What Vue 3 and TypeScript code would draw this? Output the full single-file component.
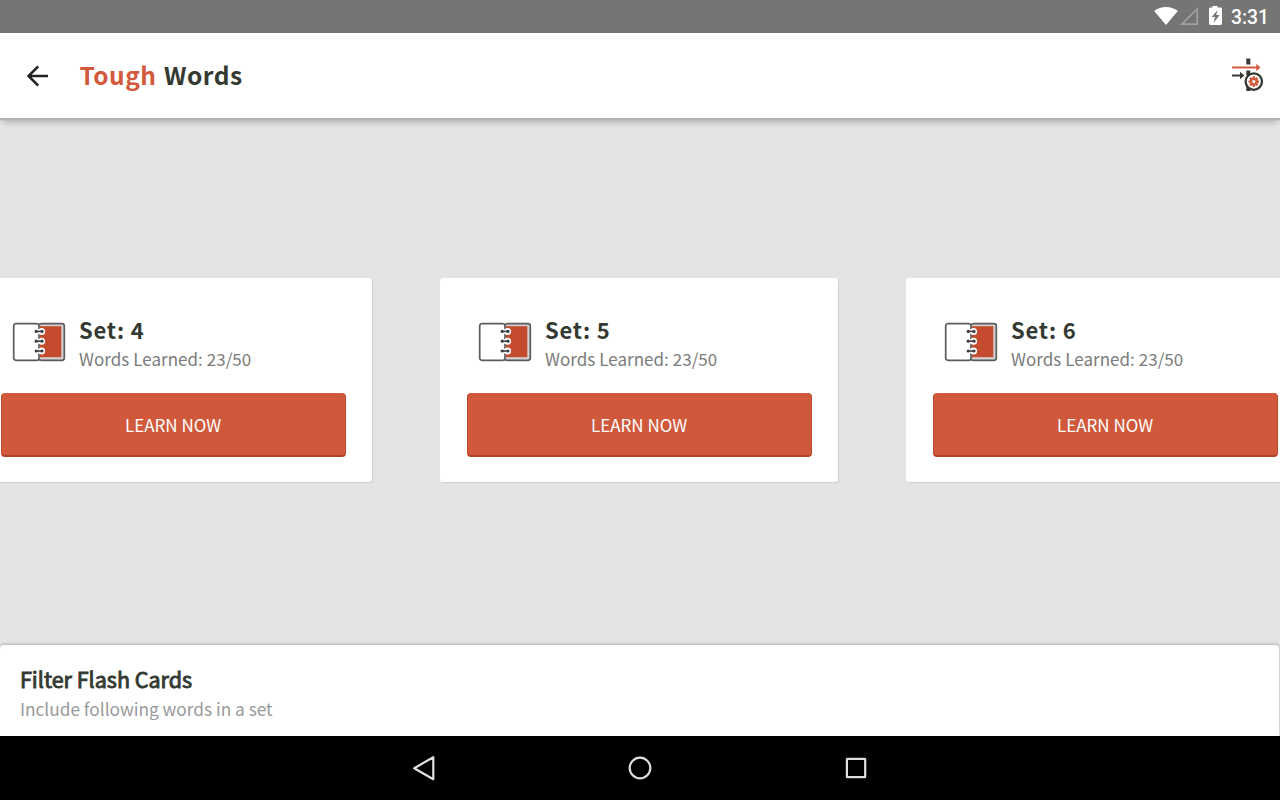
<script setup lang="ts">
interface WordSet {
  id: number
  learned: number
  total: number
}

const sets: WordSet[] = [4, 5, 6].map((id) => ({ id, learned: 23, total: 50 }))
const rings = [9.4, 19.2, 29]
const teeth = [0, 45, 90, 135]
</script>

<template>
  <div class="screen">
    <div class="status">
      <svg class="status-icons" width="72" height="33" viewBox="0 0 72 33">
        <path d="M2.2 11C8.8 5.6 19.2 5.6 25.8 11L14 25Z" fill="#fff" />
        <path d="M45.2 9V24.1H29.8Z" fill="none" stroke="#a0a0a0" stroke-width="1.7" />
        <path d="M60.4 6h5.2v1.6h2.6q1.8 0 1.8 1.4v14.6q0 1.4-1.3 1.4H58.3q-1.3 0-1.3-1.4V9Q57 7.6 58.8 7.6h1.6Z" fill="#fff" />
        <path d="M65.6 10l-6 7h3.5l-1.6 6 6.2-8h-3.5Z" fill="#757575" />
      </svg>
      <span class="time">3:31</span>
    </div>

    <header class="bar">
      <svg class="back" width="24" height="24" viewBox="0 0 24 24">
        <path d="M22 12H3M12.2 2.3L2.5 12l9.7 9.7" fill="none" stroke="#212121" stroke-width="2.5" />
      </svg>
      <h1><span class="accent">Tough</span> <span class="rest">Words</span></h1>
      <svg class="settings" width="34" height="34" viewBox="0 0 34 34">
        <path d="M15.3 0.5h4v6h-4ZM15.3 12.5h4v5h-4ZM15.3 27h4v6h-4Z" fill="#343a32" />
        <path d="M1 9.5h25" stroke="#d2593b" stroke-width="2" />
        <path d="M25.3 5.8l4.2 3.7-4.2 3.7Z" fill="#d2593b" />
        <path d="M1 17.5h9" stroke="#343a32" stroke-width="2" />
        <path d="M9 13.7l4.4 3.8L9 21.3Z" fill="#343a32" />
        <circle cx="22.8" cy="23.6" r="8.2" fill="#fff" stroke="#343a32" stroke-width="2.3" />
        <g stroke="#d2593b">
          <path v-for="a in teeth" :key="a" d="M22.8 18.3v2.6M22.8 26.3v2.6" stroke-width="2.2" :transform="`rotate(${a} 22.8 23.6)`" />
          <circle cx="22.8" cy="23.6" r="2.8" fill="#fff" stroke-width="2.4" />
        </g>
      </svg>
    </header>

    <main class="carousel">
      <article v-for="s in sets" :key="s.id" class="card">
        <div class="info">
          <svg class="book" width="54" height="40" viewBox="0 0 54 40">
            <rect x="1.5" y="1.5" width="51" height="37" rx="2.5" fill="#fff" />
            <path d="M27 2h23q2 0 2 2v32q0 2-2 2H27Z" fill="#d4d1d3" />
            <path d="M28 4.2h21.3v31H28Z" fill="#c44b2e" />
            <path d="M27 38V2M4 1.7h20.7q2 0 2.3 1.8 .3-1.8 2.3-1.8H50q2.3 0 2.3 2.3v32q0 2.3-2.3 2.3H29.3q-2 0-2.3-1.5-.3 1.5-2.3 1.5H4q-2.3 0-2.3-2.3V4Q1.7 1.7 4 1.7Z" fill="none" stroke="#5c5c5e" stroke-width="1.7" />
            <g v-for="y in rings" :key="y">
              <circle cx="29.6" :cy="y" r="3.5" fill="#fff" />
              <path :d="`M24 ${y}h6.2`" stroke="#fff" stroke-width="4.4" />
              <path :d="`M24 ${y}h6`" stroke="#3f3f43" stroke-width="1.6" />
              <circle cx="24.2" :cy="y" r="1.6" fill="#3f3f43" />
              <circle cx="30" :cy="y" r="1.6" fill="#3f3f43" />
            </g>
          </svg>
          <div class="labels">
            <h2>Set: {{ s.id }}</h2>
            <p>Words Learned: {{ s.learned }}/{{ s.total }}</p>
          </div>
        </div>
        <button class="learn" type="button">LEARN NOW</button>
      </article>
    </main>

    <section class="filter">
      <h3>Filter Flash Cards</h3>
      <p>Include following words in a set</p>
    </section>

    <nav class="nav">
      <svg width="32" height="32" viewBox="0 0 32 32"><path d="M25.3 5.2v22L6.2 16.2Z" /></svg>
      <svg width="32" height="32" viewBox="0 0 32 32"><circle cx="16" cy="16" r="10.3" /></svg>
      <svg width="32" height="32" viewBox="0 0 32 32"><rect x="6.9" y="6.9" width="18.3" height="18.3" rx=".5" /></svg>
    </nav>
  </div>
</template>

<style>
body {
  overflow: hidden;
}
</style>

<style scoped>
.screen {
  width: 1280px;
  height: 800px;
  display: flex;
  flex-direction: column;
  overflow: hidden;
  background: #e4e4e4;
  font-family: "Noto Sans CJK SC", "Noto Sans", sans-serif;
}
h1,
h2,
h3,
p {
  margin: 0;
}
.status {
  flex: none;
  height: 33px;
  background: #757575;
  display: flex;
  justify-content: flex-end;
  padding-right: 11px;
  box-sizing: border-box;
}
.status-icons {
  margin-right: 7px;
}
.time {
  width: 38px;
  white-space: nowrap;
  font: 500 19.3px/36px Roboto, sans-serif;
  color: #fff;
}
.bar {
  flex: none;
  height: 85px;
  background: #fff;
  display: flex;
  align-items: center;
  padding: 0 15px 0 26px;
  box-shadow: 0 2.5px 0 #b6b6b6, 0 8px 6px -3px rgba(0, 0, 0, 0.2);
}
.back {
  margin-right: 30px;
}
.settings {
  margin-bottom: 1px;
}
h1 {
  flex: 1;
  margin-left: -0.5px;
  padding-bottom: 2px;
  font-size: 24.5px;
  font-weight: 700;
  line-height: 83px;
  letter-spacing: 0.5px;
  word-spacing: 1.5px;
}
.accent {
  color: #d2593b;
}
.rest {
  color: #343a32;
}
.carousel {
  flex: none;
  height: 527px;
  width: 1330px;
  margin-left: -26px;
  display: flex;
  gap: 68px;
  padding-top: 160px;
  box-sizing: border-box;
}
.card {
  flex: none;
  width: 398px;
  height: 204px;
  box-sizing: border-box;
  padding: 35px 26px 0 27px;
  border-radius: 3px;
  background: #fff;
  box-shadow: 1px 1px 1px #cfcfcf;
}
.info {
  height: 80px;
  display: flex;
  gap: 13.4px;
  padding-left: 10.6px;
  box-sizing: border-box;
}
.book {
  margin-top: 9px;
}
h2 {
  font-size: 22px;
  line-height: 32px;
  height: 31px;
  letter-spacing: 0.8px;
  color: #343a32;
}
.labels p {
  font-size: 17px;
  line-height: 30px;
  letter-spacing: 0.04px;
  color: #7b7b7b;
}
.learn {
  display: block;
  width: 345px;
  height: 64px;
  border: 1px solid #bd4a30;
  border-top-color: #d0583b;
  border-bottom: 2px solid #ae422a;
  border-radius: 4px;
  padding: 0 1px 0 0;
  background: #d0583b;
  color: #fff;
  font: 400 17px/28px "Noto Sans CJK SC", sans-serif;
}
.filter {
  flex: none;
  height: 91px;
  margin-right: 1px;
  box-sizing: border-box;
  padding: 19px 20px 0;
  background: #fff;
  border-radius: 4px 4px 0 0;
  box-shadow: 0 -1px 3px rgba(0, 0, 0, 0.22);
}
h3 {
  font-size: 21.5px;
  font-weight: 400;
  line-height: 30px;
  color: #343a32;
  -webkit-text-stroke: 0.9px #343a32;
}
.filter p {
  font-size: 17.25px;
  line-height: 29px;
  color: #999;
}
.nav {
  flex: none;
  height: 64px;
  background: #000;
  display: flex;
  justify-content: center;
  align-items: center;
  gap: 184px;
}
.nav path,
.nav circle,
.nav rect {
  fill: none;
  stroke: #e0e0e0;
  stroke-width: 2.2;
  stroke-linejoin: round;
}
</style>
